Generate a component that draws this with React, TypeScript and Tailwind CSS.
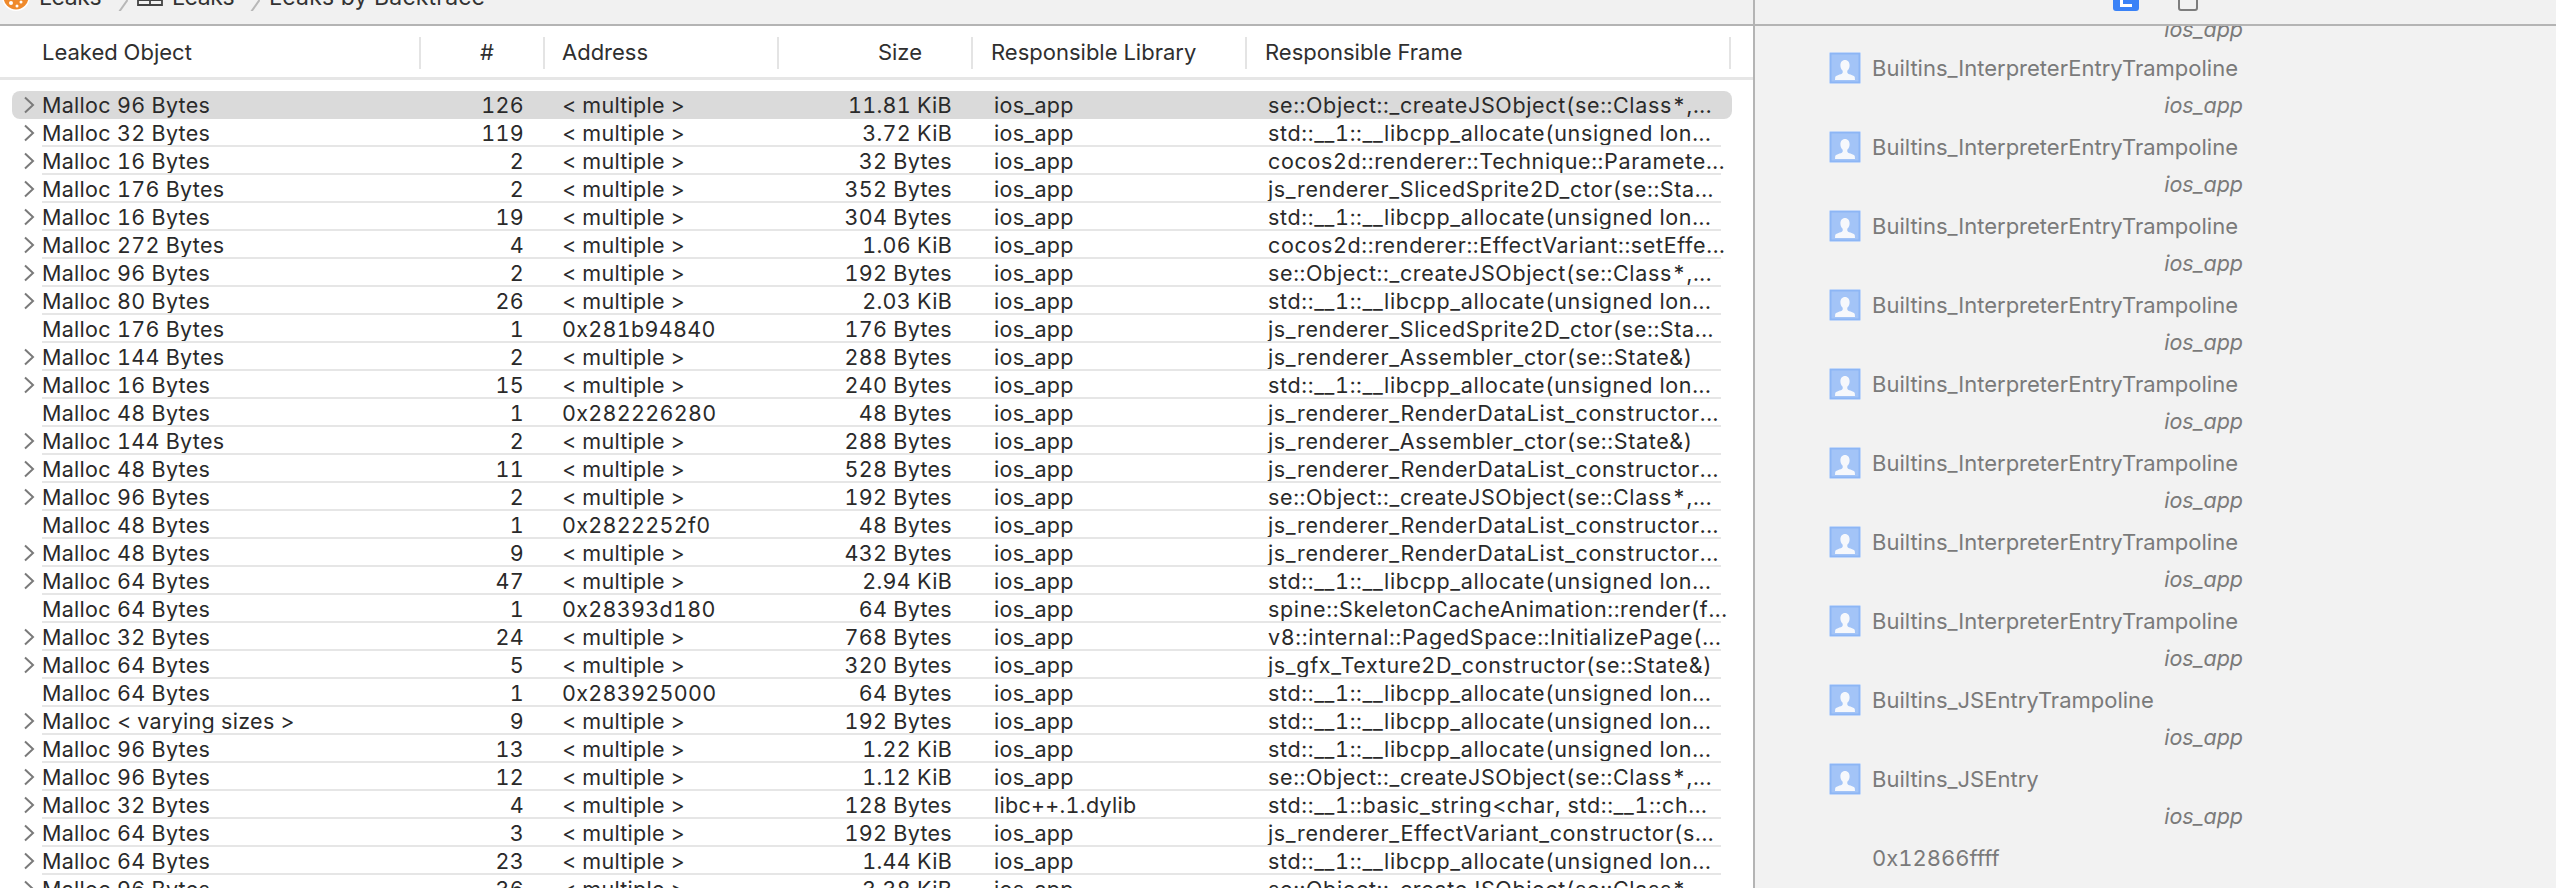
const M = "< multiple >";
const STD = "std::__1::__libcpp_allocate(unsigned lon...";
const SE = "se::Object::_createJSObject(se::Class*,...";
const RD = "js_renderer_RenderDataList_constructor...";
const AS = "js_renderer_Assembler_ctor(se::State&)";
const SL = "js_renderer_SlicedSprite2D_ctor(se::Sta...";
const data: [string, string, string, string, string, string, boolean?][] = [
  ["Malloc 96 Bytes", "126", M, "11.81 KiB", "ios_app", SE],
  ["Malloc 32 Bytes", "119", M, "3.72 KiB", "ios_app", STD],
  ["Malloc 16 Bytes", "2", M, "32 Bytes", "ios_app", "cocos2d::renderer::Technique::Paramete..."],
  ["Malloc 176 Bytes", "2", M, "352 Bytes", "ios_app", SL],
  ["Malloc 16 Bytes", "19", M, "304 Bytes", "ios_app", STD],
  ["Malloc 272 Bytes", "4", M, "1.06 KiB", "ios_app", "cocos2d::renderer::EffectVariant::setEffe..."],
  ["Malloc 96 Bytes", "2", M, "192 Bytes", "ios_app", SE],
  ["Malloc 80 Bytes", "26", M, "2.03 KiB", "ios_app", STD],
  ["Malloc 176 Bytes", "1", "0x281b94840", "176 Bytes", "ios_app", SL, true],
  ["Malloc 144 Bytes", "2", M, "288 Bytes", "ios_app", AS],
  ["Malloc 16 Bytes", "15", M, "240 Bytes", "ios_app", STD],
  ["Malloc 48 Bytes", "1", "0x282226280", "48 Bytes", "ios_app", RD, true],
  ["Malloc 144 Bytes", "2", M, "288 Bytes", "ios_app", AS],
  ["Malloc 48 Bytes", "11", M, "528 Bytes", "ios_app", RD],
  ["Malloc 96 Bytes", "2", M, "192 Bytes", "ios_app", SE],
  ["Malloc 48 Bytes", "1", "0x2822252f0", "48 Bytes", "ios_app", RD, true],
  ["Malloc 48 Bytes", "9", M, "432 Bytes", "ios_app", RD],
  ["Malloc 64 Bytes", "47", M, "2.94 KiB", "ios_app", STD],
  ["Malloc 64 Bytes", "1", "0x28393d180", "64 Bytes", "ios_app", "spine::SkeletonCacheAnimation::render(f...", true],
  ["Malloc 32 Bytes", "24", M, "768 Bytes", "ios_app", "v8::internal::PagedSpace::InitializePage(..."],
  ["Malloc 64 Bytes", "5", M, "320 Bytes", "ios_app", "js_gfx_Texture2D_constructor(se::State&)"],
  ["Malloc 64 Bytes", "1", "0x283925000", "64 Bytes", "ios_app", STD, true],
  ["Malloc < varying sizes >", "9", M, "192 Bytes", "ios_app", STD],
  ["Malloc 96 Bytes", "13", M, "1.22 KiB", "ios_app", STD],
  ["Malloc 96 Bytes", "12", M, "1.12 KiB", "ios_app", SE],
  ["Malloc 32 Bytes", "4", M, "128 Bytes", "libc++.1.dylib", "std::__1::basic_string<char, std::__1::ch..."],
  ["Malloc 64 Bytes", "3", M, "192 Bytes", "ios_app", "js_renderer_EffectVariant_constructor(s..."],
  ["Malloc 64 Bytes", "23", M, "1.44 KiB", "ios_app", STD],
  ["Malloc 96 Bytes", "36", M, "3.38 KiB", "ios_app", SE],
];

function Chevron() {
  return (
    <svg width="12" height="18" viewBox="0 0 12 18" className="block">
      <path d="M2 1.500l8 7.500-8 7.500" fill="none" stroke="#7a7a7a" strokeWidth="2" />
    </svg>
  );
}

function Person() {
  return (
    <svg width="32" height="32" viewBox="0 0 32 32" className="block shrink-0">
      <rect x="0" y="0" width="32" height="32" fill="#f7f8fa" />
      <rect x="1.5" y="1.5" width="29" height="29" fill="#a3c4f7" stroke="#8db6f5" strokeWidth="2" />
      <path d="M16 8c-3 0-4.600 2.300-4.600 5.200 0 2.400.9 4.400 2.300 5.600v1.600c0 .9-1.200 1.400-3.200 2.200-2.300.9-3.900 1.500-4.300 2.600l-.2 2.800h20l-.2-2.800c-.4-1.100-2-1.700-4.300-2.600-2-.8-3.200-1.300-3.200-2.200v-1.600c1.400-1.200 2.300-3.200 2.300-5.600C20.600 10.300 19 8 16 8z" fill="#f6f8fc" />
    </svg>
  );
}

function Slash() {
  return (
    <svg width="10" height="28" viewBox="0 0 10 28" className="block shrink-0">
      <path d="M9.500 17L1 29" fill="none" stroke="#b8b8b8" strokeWidth="2" />
    </svg>
  );
}

export default function App() {
  const frames = Array.from({ length: 8 }, () => "Builtins_InterpreterEntryTrampoline").concat(["Builtins_JSEntryTrampoline", "Builtins_JSEntry"]);
  return (
    <div className="flex h-[888px] w-[2556px] overflow-hidden bg-white font-['Inter','Liberation_Sans',sans-serif] text-[#2a2a2a] tabular-nums">
      <div className="flex w-[1753px] shrink-0 flex-col">
        <div className="flex h-[26px] shrink-0 items-end overflow-hidden border-b-2 border-[#b4b4b4] bg-[#f1f1f1] pl-[2px] text-[23px] text-[#333333]">
          <div className="mb-[13px] flex h-[28px] items-center whitespace-nowrap leading-[28px]">
            <svg width="28" height="28" viewBox="0 0 28 28" className="block shrink-0">
              <circle cx="14" cy="14" r="14" fill="#ffffff" />
              <circle cx="14" cy="14" r="12.500" fill="#ef8a2c" />
              <circle cx="9" cy="20" r="2" fill="#fff" />
              <circle cx="15" cy="23" r="1.500" fill="#fff" />
              <circle cx="19" cy="19" r="1.500" fill="#fff" />
            </svg>
            <span className="ml-[9px] w-[63px] tracking-[-0.400px]">Leaks</span>
            <span className="ml-[16px]"><Slash /></span>
            <svg width="26" height="28" viewBox="0 0 26 28" className="ml-[9px] block shrink-0">
              <path d="M1 2h24v20H1zM13 2v20M1 17h24" fill="none" stroke="#444444" strokeWidth="1.800" />
            </svg>
            <span className="ml-[9px] w-[63px] tracking-[-0.400px]">Leaks</span>
            <span className="ml-[15px]"><Slash /></span>
            <span className="ml-[9px] tracking-[0.200px]">Leaks by Backtrace</span>
          </div>
        </div>
        <div className="grid h-[54px] shrink-0 grid-cols-[421px_124px_234px_194px_274px_484px] items-center border-b-[3px] border-[#e6e6e6] pt-[2px] text-[22px] text-[#2f2f2f]">
          <div className="flex h-[32px] items-center border-r-2 border-[#e4e4e4] pl-[42px]">Leaked Object</div>
          <div className="flex h-[32px] items-center justify-end border-r-2 border-[#e4e4e4] pr-[49px]">#</div>
          <div className="flex h-[32px] items-center border-r-2 border-[#e4e4e4] pl-[17px]">Address</div>
          <div className="flex h-[32px] items-center justify-end border-r-2 border-[#e4e4e4] pr-[49px]">Size</div>
          <div className="flex h-[32px] items-center border-r-2 border-[#e4e4e4] pl-[18px]">Responsible Library</div>
          <div className="flex h-[32px] items-center border-r-2 border-[#e4e4e4] pl-[18px]">Responsible Frame</div>
        </div>
        <div className="pt-[11px] text-[21.500px] tracking-[0.300px]">
          {data.map((r, i) => (
            <div key={i} className={"relative ml-[12px] mr-[21px] grid h-[28px] grid-cols-[409px_124px_234px_194px_274px_461px] items-center leading-[28px] " + (i === 0 ? "rounded-[8px] bg-[#dadada]" : "")}>
              {i > 0 && <div className="absolute bottom-0 left-[30px] right-[11px] h-[2px] bg-[#e6e6e6]" />}
              <div className="flex items-center whitespace-nowrap">
                <span className="flex w-[30px] justify-start pl-[11px]">{!r[6] && <Chevron />}</span>
                <span>{r[0]}</span>
              </div>
              <div className="pr-[21px] text-right">{r[1]}</div>
              <div className="pl-[17px] whitespace-nowrap">{r[2]}</div>
              <div className="pr-[21px] text-right whitespace-nowrap">{r[3]}</div>
              <div className="pl-[21px] whitespace-nowrap">{r[4]}</div>
              <div className="pl-[21px] whitespace-nowrap tracking-[0.650px]">{r[5]}</div>
            </div>
          ))}
        </div>
      </div>
      <div className="flex flex-1 flex-col border-l-2 border-[#b4b4b4] bg-[#f2f2f2]">
        <div className="flex h-[26px] shrink-0 items-start gap-[39px] overflow-hidden border-b-2 border-[#b4b4b4] bg-[#f1f1f1] pl-[358px]">
          <div className="-mt-[16px] flex h-[27px] w-[26px] items-center justify-center rounded-[3px] bg-[#3a82f7]">
            <div className="mt-[6px] h-[12px] w-[12px] border-b-[3px] border-l-[3px] border-white" />
          </div>
          <div className="-mt-[16px] h-[27px] w-[20px] rounded-[3px] border-2 border-[#7d7d7d]" />
        </div>
        <div className="h-full overflow-hidden text-[22px] text-[#7a7a7a]">
          <div className="relative h-[24px]">
            <div className="absolute right-[313px] -top-[13px] text-[21.500px] italic">ios_app</div>
          </div>
          {frames.map((f, i) => (
            <div key={i} className="h-[79px] pl-[74px]">
              <div className="flex h-[36px] items-center gap-[11px]">
                <Person />
                <span className="whitespace-nowrap">{f}</span>
              </div>
              <div className="mt-[5px] pr-[313px] text-right text-[21.500px] italic leading-[28px]">ios_app</div>
            </div>
          ))}
          <div className="pl-[117px] pt-[4px] leading-[28px]">0x12866ffff</div>
        </div>
      </div>
    </div>
  );
}
